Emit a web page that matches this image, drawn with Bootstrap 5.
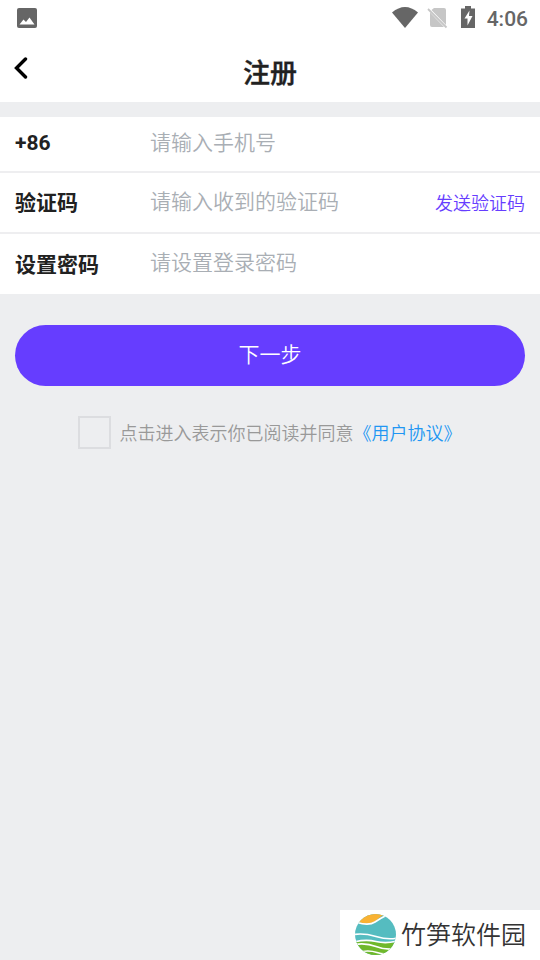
<!DOCTYPE html>
<html lang="zh-CN">
<head>
<meta charset="utf-8">
<meta name="viewport" content="width=device-width, initial-scale=1">
<title>注册</title>
<link href="https://cdn.jsdelivr.net/npm/bootstrap@5.3.0/dist/css/bootstrap.min.css" rel="stylesheet">
<style>
body { background: #edeef0; color: #212121; font-family: Roboto, "Noto Sans CJK SC", sans-serif; font-size: 21px; line-height: 30px; }
.status-bar { height: 36px; padding: 0 12px 0 17px; color: #666; }
.clock { font-size: 21px; font-weight: 500; padding: 2px 0 0 11px; }
.title-bar { display: grid; grid-template-columns: 60px 1fr 60px; height: 66px; }
.back-btn { padding: 0 0 2px 14px; line-height: 0; border: 0; }
.title-text { font-size: 27px; line-height: 40px; padding-top: 10px; font-weight: 500; -webkit-text-stroke: .4px #212121; }
.form-block { margin-top: 15px; }
.form-line { padding: 0 15px; height: 61px; }
.form-line:first-child { height: 54px; }
.form-line + .form-line { border-top: 2px solid #eeeef0; }
.form-line:last-child { height: 62px; }
.field-label { width: 135px; font-weight: 700; padding-top: 1px; }
.form-line:first-child .field-label { padding: 0 0 2px; }
.field-input { font-size: 21px; line-height: 30px; padding: 0 0 2px; min-width: 0; font-weight: 350; }
.field-input::placeholder { color: #a9aeb4; opacity: 1; }
.code-btn { font-size: 18px; line-height: 26px; color: #663dff; border: 0; font-weight: 350; padding: 2px 0 0; }
.next-area { padding: 31px 15px 0; }
.next-btn { background: #663dff; color: #fff; font-size: 21px; line-height: 30px; height: 61px; padding: 0 0 2px; border: 0; font-weight: 350; }
.next-btn:hover { background: #5932e6; color: #fff; }
.agree-line { margin-top: 30px; font-size: 18px; line-height: 26px; color: #999; padding-right: 1px; font-weight: 350; }
.agree-line .form-check-input { width: 33px; height: 33px; border: 2px solid #dcdde0; border-radius: 0; background-color: transparent; margin: 0 9px 0 0; }
.agree-line .form-check-input:checked { background-color: #663dff; }
.agree-text { padding-top: 2px; }
.agree-link { color: #2196f3; }
.site-mark { height: 50px; width: 200px; padding: 0 0 2px 14px; color: #333; font-size: 25px; line-height: 36px; font-weight: 350; }
.mark-name { padding: 4px 0 0 4px; }
</style>
<script src="https://cdn.jsdelivr.net/npm/bootstrap@5.3.0/dist/js/bootstrap.bundle.min.js"></script>
</head>
<body class="d-flex flex-column min-vh-100">
<header class="bg-white">
  <div class="status-bar d-flex align-items-center justify-content-between">
    <svg width="20" height="20" viewBox="0 0 20 20" aria-hidden="true"><rect width="20" height="20" rx="2" fill="#666"/><path d="M2.500 16.500 6.500 11.500 9 14 12.500 9.500 17.500 16.500z" fill="#fff"/></svg>
    <div class="d-flex align-items-center">
      <svg width="84" height="24" viewBox="0 0 84 24" aria-hidden="true">
        <path d="M0 6.500Q13-4.500 26 6.500L13 22z" fill="#666"/>
        <path d="M42 2h10q2 0 2 2v15L39.500 4z M38 6.500 52 21H40q-2 0-2-2z" fill="#c6c6c6"/>
        <path d="M36 3 54.500 21.500" stroke="#c6c6c6" stroke-width="1.800"/>
        <path d="M69 2.500h4V0h6v2.500h4V22H69z" fill="#666"/>
        <path d="M77.500 4.500 72.500 12.500H75.500v7L80.500 10H77z" fill="#fff"/>
      </svg>
      <span class="clock">4:06</span>
    </div>
  </div>
  <div class="title-bar align-items-center">
    <button type="button" class="btn back-btn text-start" aria-label="返回"><svg width="14" height="22" viewBox="0 0 14 22" aria-hidden="true"><path d="M11.500 2 2.500 11 11.500 20" fill="none" stroke="#000" stroke-width="3.400" stroke-linecap="round"/></svg></button>
    <h1 class="title-text text-center mb-0">注册</h1>
  </div>
</header>
<main>
  <form>
    <div class="form-block bg-white">
      <div class="form-line d-flex align-items-center">
        <label class="field-label flex-shrink-0" for="phone">+86</label>
        <input class="form-control-plaintext field-input flex-grow-1" id="phone" type="tel" placeholder="请输入手机号">
      </div>
      <div class="form-line d-flex align-items-center">
        <label class="field-label flex-shrink-0" for="code">验证码</label>
        <input class="form-control-plaintext field-input flex-grow-1" id="code" type="text" placeholder="请输入收到的验证码">
        <button type="button" class="btn code-btn flex-shrink-0">发送验证码</button>
      </div>
      <div class="form-line d-flex align-items-center">
        <label class="field-label flex-shrink-0" for="password">设置密码</label>
        <input class="form-control-plaintext field-input flex-grow-1" id="password" type="password" placeholder="请设置登录密码">
      </div>
    </div>
    <div class="next-area">
      <button type="submit" class="btn next-btn rounded-pill w-100">下一步</button>
    </div>
    <div class="agree-line d-flex align-items-center justify-content-center">
      <input class="form-check-input flex-shrink-0" type="checkbox" id="agree">
      <label class="agree-text" for="agree">点击进入表示你已阅读并同意</label><a class="agree-text agree-link text-decoration-none" href="#">《用户协议》</a>
    </div>
  </form>
</main>
<footer class="site-mark bg-white d-flex align-items-center mt-auto ms-auto">
  <svg class="flex-shrink-0" width="43" height="43" viewBox="0 0 43 43" aria-hidden="true">
    <defs><clipPath id="disc"><circle cx="21.500" cy="21.500" r="20.500"/></clipPath></defs>
    <g clip-path="url(#disc)">
      <path d="M0 0H43V43H0z" fill="#55bcc0"/>
      <path d="M0 29Q12 27 22 29T43 29V43H0z" fill="#70b82c"/>
      <path d="M0 0H32Q26 4 21 8.500Q14 12 4 9z" fill="#f9b233"/>
      <g fill="none" stroke="#fff" stroke-width="1.600">
        <path d="M3 9.500Q15 13 21 9T33 2"/>
        <path d="M0 21.500Q10 20 22 23.500T43 25"/>
        <path d="M0 29Q12 26 22 28.500T43 28"/>
        <path d="M0 31.500Q12 29.500 22 33.500T43 35.500"/>
        <path d="M4 39.500Q14 36.500 23 39.500T37 39"/>
      </g>
    </g>
  </svg>
  <span class="mark-name text-nowrap">竹笋软件园</span>
</footer>
</body>
</html>
